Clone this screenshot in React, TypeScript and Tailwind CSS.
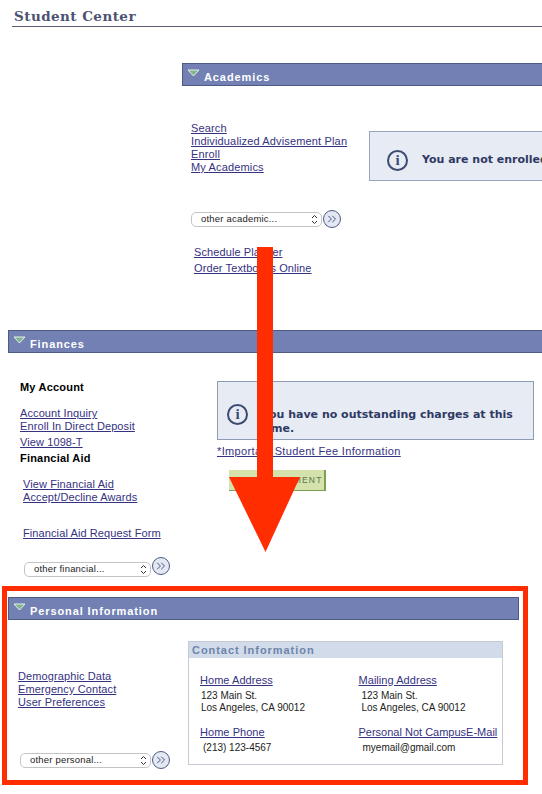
import React from 'react';
import { ChevronsRight } from 'lucide-react';

const NavLink: React.FC<{ children: React.ReactNode; className?: string; tracking?: string }> = ({
    children,
    className = '',
    tracking = 'tracking-[0.1px]',
}) => (
    <a className={`block h-[13px] text-[11px] leading-[13px] ${tracking} text-[#35327f] underline whitespace-nowrap ${className}`}>
        {children}
    </a>
);

const SectionHeader: React.FC<{ title: string; className?: string }> = ({ title, className = '' }) => (
    <div className={`flex h-[23px] border border-[#4d5b85] bg-[#7280b4] ${className}`}>
        <svg className="ml-[4px] mt-[5px] h-[8px] w-[13px]" viewBox="0 0 13 8">
            <polygon points="1,1 12,1 6.5,7" fill="#7fb58f" stroke="#e8f0ea" strokeWidth="1" />
        </svg>
        <span className="ml-[4px] mt-[7px] text-[11px] font-bold leading-[13px] tracking-[0.9px] text-white">{title}</span>
    </div>
);

const OtherSelect: React.FC<{ label: string; className?: string; raised?: boolean }> = ({ label, className = '', raised }) => (
    <div className={`flex gap-[1px] ${raised ? 'items-start' : 'items-center'}`}>
        <div className={`flex h-[15px] items-center justify-between rounded-[5px] border border-[#c4c4c4] bg-white pl-[9px] pr-[3px] text-[9.5px] tracking-[0.2px] text-[#222] ${raised ? 'mt-[5px]' : ''} ${className}`}>
            <span>{label}</span>
            <svg className="h-[11px] w-[7px]" viewBox="0 0 7 11" fill="none" stroke="#333" strokeWidth="1">
                <path d="M1 4l2.5-2.5L6 4M1 7l2.5 2.5L6 7" />
            </svg>
        </div>
        <div className="flex h-[18px] w-[18px] items-center justify-center rounded-full border border-[#4d5b85] bg-[#e3e8f2]">
            <ChevronsRight className="h-[14px] w-[14px] text-[#3d4a78]" strokeWidth={1.6} />
        </div>
    </div>
);

const InfoIcon: React.FC<{ className?: string }> = ({ className = '' }) => (
    <div className={`flex h-[21px] w-[21px] shrink-0 items-center justify-center rounded-full border-2 border-[#3d4a70] text-[15px] font-bold leading-none text-[#3d4a70] [font-family:'Liberation_Serif',serif] ${className}`}>
        i
    </div>
);

const App: React.FC = () => {
    return (
        <div className="relative h-[794px] w-[542px] overflow-hidden bg-white [font-family:'Liberation_Sans',Arial,sans-serif]">
            <div className="ml-3 h-[27px] border-b border-[#5a5e70] pl-[2px] pt-[8px] text-[15px] font-bold leading-[17px] tracking-[0.45px] text-[#4d5273] [font-family:'DejaVu_Serif',serif]">
                <span className="text-[13.5px]">Student Center</span>
            </div>

            {/* Academics */}
            <section className="ml-[182px] mt-[36px]">
                <SectionHeader title="Academics" className="w-[400px]" />
                <div className="mt-[36px] flex pl-[9px]">
                    <div className="w-[178px] shrink-0">
                        <NavLink tracking="tracking-[0.15px]">Search</NavLink>
                        <NavLink tracking="tracking-[0.15px]">Individualized Advisement Plan</NavLink>
                        <NavLink tracking="tracking-[0.15px]">Enroll</NavLink>
                        <NavLink tracking="tracking-[0.15px]">My Academics</NavLink>
                    </div>
                    <div className="mt-[9px] flex h-[50px] w-[300px] shrink-0 items-center border border-[#9aa5bd] bg-[#e7ebf4] pl-[17px] pt-[8px]">
                        <InfoIcon />
                        <span className="ml-[14px] whitespace-nowrap text-[11px] font-bold text-[#2f3a63] [font-family:'DejaVu_Sans',sans-serif]">You are not enrolled</span>
                    </div>
                </div>
                <div className="ml-[9px] mt-[29px]">
                    <OtherSelect label="other academic..." className="w-[131px]" />
                </div>
                <div className="ml-[12px] mt-[18px]">
                    <NavLink>Schedule Planner</NavLink>
                    <NavLink className="mt-[3px]">Order Textbooks Online</NavLink>
                </div>
            </section>

            {/* Finances */}
            <section className="ml-[8px] mt-[55px]">
                <SectionHeader title="Finances" className="w-[560px]" />
                <div className="mt-[28px] flex pl-[12px]">
                    <div className="w-[197px] shrink-0">
                        <div className="h-[13px] text-[11px] font-bold leading-[13px] tracking-[0.2px] text-black">My Account</div>
                        <NavLink className="mt-[13px]">Account Inquiry</NavLink>
                        <NavLink>Enroll In Direct Deposit</NavLink>
                        <NavLink className="mt-[3px]">View 1098-T</NavLink>
                        <div className="mt-[3px] h-[13px] text-[11px] font-bold leading-[13px] tracking-[0.2px] text-black">Financial Aid</div>
                        <NavLink className="ml-[3px] mt-[13px]">View Financial Aid</NavLink>
                        <NavLink className="ml-[3px]">Accept/Decline Awards</NavLink>
                        <NavLink className="ml-[3px] mt-[23px]">Financial Aid Request Form</NavLink>
                        <div className="ml-[4px] mt-[17px]">
                            <OtherSelect label="other financial..." className="w-[127px]" raised />
                        </div>
                    </div>
                    <div>
                        <div className="flex h-[59px] w-[317px] items-center border border-[#8f9bb5] bg-[#e7ebf4] pl-[9px]">
                            <InfoIcon className="mt-[8px]" />
                            <p className="ml-[14px] mt-[23px] w-[262px] text-[11px] font-bold leading-[14px] text-[#2f3a63] [font-family:'DejaVu_Sans',sans-serif]">You have no outstanding charges at this time.</p>
                        </div>
                        <NavLink className="mt-[5px]" tracking="tracking-[0.35px]">*Important Student Fee Information</NavLink>
                        <div className="ml-[12px] mt-[12px] flex h-[21px] w-[97px] items-center border-b border-r-2 border-[#7f9f55] bg-[#d5e2ab] pl-[4px] text-[8.5px] tracking-[1.15px] text-[#5a7350] whitespace-nowrap">
                            MAKE A PAYMENT
                        </div>
                    </div>
                </div>
            </section>

            {/* Personal Information */}
            <section className="ml-[8px] mt-[20px] w-[511px]">
                <SectionHeader title="Personal Information" />
                <div className="mt-[21px] flex">
                    <div className="w-[180px] shrink-0 pl-[10px] pt-[29px]">
                        <NavLink>Demographic Data</NavLink>
                        <NavLink>Emergency Contact</NavLink>
                        <NavLink>User Preferences</NavLink>
                        <div className="ml-[2px] mt-[42px]">
                            <OtherSelect label="other personal..." className="w-[131px]" />
                        </div>
                    </div>
                    <div className="h-[124px] w-[315px] border border-[#c5cad4]">
                        <div className="h-[16px] bg-[#d2dbea] pl-[3px] text-[11px] font-bold leading-[16px] tracking-[0.95px] text-[#6d85ab]">Contact Information</div>
                        <div className="grid grid-cols-[158.5px_1fr] gap-y-[12px] pl-[11px] pt-[16px] text-[10px] leading-[12px] text-[#222]">
                            <div>
                                <NavLink tracking="tracking-[0.05px]">Home Address</NavLink>
                                <div className="ml-[1px] mt-[3px]">123 Main St.<br />Los Angeles, CA 90012</div>
                            </div>
                            <div>
                                <NavLink tracking="tracking-[0.05px]">Mailing Address</NavLink>
                                <div className="ml-[3px] mt-[3px]">123 Main St.<br />Los Angeles, CA 90012</div>
                            </div>
                            <div>
                                <NavLink tracking="tracking-[0.05px]">Home Phone</NavLink>
                                <div className="ml-[3px] mt-[3px]">(213) 123-4567</div>
                            </div>
                            <div>
                                <NavLink tracking="tracking-[0px]">Personal Not CampusE-Mail</NavLink>
                                <div className="ml-[4px] mt-[3px]">myemail@gmail.com</div>
                            </div>
                        </div>
                    </div>
                </div>
            </section>

            {/* annotations drawn over the page */}
            <svg className="absolute left-[225px] top-[247px] h-[305px] w-[80px]" viewBox="0 0 80 305">
                <polygon points="32,0 48,0 48,230 75,230 40.5,305 4,230 32,230" fill="#ff2d00" />
            </svg>
            <div className="absolute left-[2px] top-[586px] h-[199px] w-[526px] border-[5px] border-[#ff2d00]" />
        </div>
    );
};

export default App;
